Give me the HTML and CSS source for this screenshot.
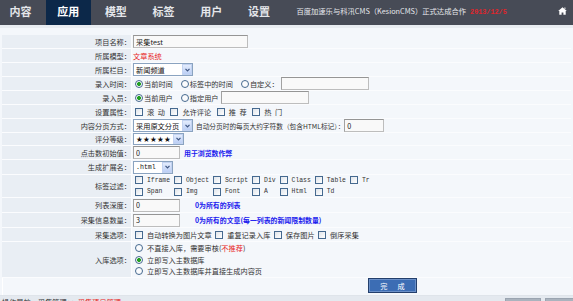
FILE: index.html
```html
<!DOCTYPE html>
<html lang="zh-CN">
<head>
<meta charset="utf-8">
<title>采集项目管理</title>
<link rel="stylesheet" href="styles.css">
</head>
<body>
<div class="topnav">
  <ul class="tabs">
    <li>内容</li>
    <li class="active">应用</li>
    <li>模型</li>
    <li>标签</li>
    <li>用户</li>
    <li>设置</li>
  </ul>
  <div class="notice">百度加速乐与科汛CMS（KesionCMS）正式达成合作<span class="date">2013/12/5</span></div>
  <span class="home"><svg width="9" height="8" viewBox="0 0 9 8"><path d="M4.5 0.2 L8.8 4 L7.7 4 L7.7 7.8 L5.4 7.8 L5.4 5.4 L3.6 5.4 L3.6 7.8 L1.3 7.8 L1.3 4 L0.2 4 Z M6.4 0.6 L7.4 0.6 L7.4 2.2 L6.4 1.4 Z" fill="#fff"/></svg></span>
</div>
<div class="subbar"></div>

<div class="form">
  <div class="row h14">
    <div class="lbl">项目名称：</div>
    <div class="val"><input class="ipt w115" type="text" value="采集test"></div>
  </div>
  <div class="row h14">
    <div class="lbl">所属模型：</div>
    <div class="val"><span class="red">文章系统</span></div>
  </div>
  <div class="row h14">
    <div class="lbl">所属栏目：</div>
    <div class="val"><span class="sel w60"><span class="txt">新闻频道</span><span class="arr"><svg width="5" height="4" viewBox="0 0 5 4"><path d="M0.5 0.8 L2.5 2.8 L4.5 0.8" stroke="#3f5682" stroke-width="1.2" fill="none"/></svg></span></span></div>
  </div>
  <div class="row h14">
    <div class="lbl">录入时间：</div>
    <div class="val">
      <label class="opt tight first"><input class="rd" type="radio" name="t" checked>当前时间</label>
      <label class="opt tight"><input class="rd" type="radio" name="t">标签中的时间</label>
      <label class="opt tight last"><input class="rd" type="radio" name="t">自定义：</label>
      <input class="ipt w88" type="text">
    </div>
  </div>
  <div class="row h14">
    <div class="lbl">录入员：</div>
    <div class="val">
      <label class="opt tight first"><input class="rd" type="radio" name="u" checked>当前用户</label>
      <label class="opt tight last"><input class="rd" type="radio" name="u">指定用户</label>
      <input class="ipt w88" type="text">
    </div>
  </div>
  <div class="row h14">
    <div class="lbl">设置属性：</div>
    <div class="val">
      <label class="opt wide first"><input class="cb" type="checkbox">滚&ensp;动</label>
      <label class="opt wide"><input class="cb" type="checkbox">允许评论</label>
      <label class="opt wide"><input class="cb" type="checkbox">推&ensp;荐</label>
      <label class="opt wide"><input class="cb" type="checkbox">热&ensp;门</label>
    </div>
  </div>
  <div class="row h14">
    <div class="lbl">内容分页方式：</div>
    <div class="val">
      <span class="sel w60"><span class="txt">采用原文分页</span><span class="arr"><svg width="5" height="4" viewBox="0 0 5 4"><path d="M0.5 0.8 L2.5 2.8 L4.5 0.8" stroke="#3f5682" stroke-width="1.2" fill="none"/></svg></span></span>
      <span class="small">自动分页时的每页大约字符数（包含HTML标记）：</span>
      <input class="ipt w40" type="text" value="0">
    </div>
  </div>
  <div class="row h13">
    <div class="lbl">评分等级：</div>
    <div class="val"><span class="sel w51"><span class="txt stars">★★★★★</span><span class="arr"><svg width="5" height="4" viewBox="0 0 5 4"><path d="M0.5 0.8 L2.5 2.8 L4.5 0.8" stroke="#3f5682" stroke-width="1.2" fill="none"/></svg></span></span></div>
  </div>
  <div class="row h14">
    <div class="lbl">点击数初始值：</div>
    <div class="val"><input class="ipt w47" type="text" value="0"><span class="tip">用于浏览数作弊</span></div>
  </div>
  <div class="row h15">
    <div class="lbl">生成扩展名：</div>
    <div class="val"><span class="sel w40"><span class="txt mono">.html</span><span class="arr"><svg width="5" height="4" viewBox="0 0 5 4"><path d="M0.5 0.8 L2.5 2.8 L4.5 0.8" stroke="#3f5682" stroke-width="1.2" fill="none"/></svg></span></span></div>
  </div>
  <div class="row h23">
    <div class="lbl">标签过滤：</div>
    <div class="val">
      <div class="tags">
        <label class="tag"><input class="cb" type="checkbox">Iframe</label>
        <label class="tag"><input class="cb" type="checkbox">Object</label>
        <label class="tag"><input class="cb" type="checkbox">Script</label>
        <label class="tag"><input class="cb" type="checkbox">Div</label>
        <label class="tag"><input class="cb" type="checkbox">Class</label>
        <label class="tag"><input class="cb" type="checkbox">Table</label>
        <label class="tag"><input class="cb" type="checkbox">Tr</label>
        <label class="tag"><input class="cb" type="checkbox">Span</label>
        <label class="tag"><input class="cb" type="checkbox">Img</label>
        <label class="tag"><input class="cb" type="checkbox">Font</label>
        <label class="tag"><input class="cb" type="checkbox">A</label>
        <label class="tag"><input class="cb" type="checkbox">Html</label>
        <label class="tag"><input class="cb" type="checkbox">Td</label>
      </div>
    </div>
  </div>
  <div class="row h15">
    <div class="lbl">列表深度：</div>
    <div class="val"><input class="ipt w47" type="text" value="0"><span class="tip far">0为所有的列表</span></div>
  </div>
  <div class="row h15">
    <div class="lbl">采集信息数量：</div>
    <div class="val"><input class="ipt w47" type="text" value="3"><span class="tip far">0为所有的文章(每一列表的新闻限制数量)</span></div>
  </div>
  <div class="row h14">
    <div class="lbl">采集选项：</div>
    <div class="val">
      <label class="opt first"><input class="cb" type="checkbox">自动转换为图片文章</label>
      <label class="opt"><input class="cb" type="checkbox">重复记录入库</label>
      <label class="opt"><input class="cb" type="checkbox">保存图片</label>
      <label class="opt"><input class="cb" type="checkbox">倒序采集</label>
    </div>
  </div>
  <div class="row h36">
    <div class="lbl">入库选项：</div>
    <div class="val">
      <div class="stack">
        <label class="opt"><input class="rd" type="radio" name="s">不直接入库，需要审核(<span class="red">不推荐</span>)</label>
        <label class="opt"><input class="rd" type="radio" name="s" checked>立即写入主数据库</label>
        <label class="opt"><input class="rd" type="radio" name="s">立即写入主数据库并直接生成内容页</label>
      </div>
    </div>
  </div>
</div>

<div class="actions">
  <button class="btn" type="button"><span>完</span><span>成</span></button>
</div>

<div class="footbar">
  <span class="crumb">操作导航：采集管理 &gt;&gt; <span class="red">采集项目管理</span></span>
  <span class="fbtns"><span class="fbtn">添加项目</span><span class="fbtn">返回列表</span></span>
</div>
</body>
</html>
```

FILE: styles.css
```css
html, body {
  margin: 0;
  padding: 0;
}
body {
  width: 573px;
  height: 301px;
  overflow: hidden;
  background: #f4f7fb;
  font-family: "Noto Sans CJK SC", "DejaVu Sans", sans-serif;
  font-size: 7.2px;
  color: #333;
}

/* top navigation */
.topnav {
  display: flex;
  height: 25px;
  background: #474b56;
}
.tabs {
  display: flex;
  gap: 2.7px;
  margin: 0 0 0 -2px;
  padding: 0;
  list-style: none;
}
.tabs li {
  width: 45px;
  height: 25px;
  box-sizing: border-box;
  padding-bottom: 3px;
  display: flex;
  align-items: center;
  justify-content: center;
  color: #e4e6ea;
  font-size: 11px;
  font-weight: bold;
}
.tabs li.active {
  background: #0c2849;
  color: #fff;
}
.notice {
  align-self: center;
  margin: 0 0 4px 15px;
  color: #e6e8ec;
  font-size: 7.3px;
  white-space: nowrap;
}
.notice .date {
  color: #e0242a;
  font-family: "Liberation Mono", monospace;
  font-weight: bold;
  font-size: 6.8px;
  margin-left: 4px;
}
.home {
  align-self: center;
  margin: 0 6px 4px auto;
  display: flex;
}

.subbar {
  height: 10px;
  box-sizing: border-box;
  border-top: 3px solid #e8ecf1;
}

/* form */
.form {
  margin: 0 2px;
}
.row {
  display: flex;
  box-sizing: border-box;
  border-bottom: 1px solid #fbfcfe;
}
.h13 { height: 13px; }
.h14 { height: 14px; }
.h15 { height: 15px; }
.h23 { height: 23px; }
.h36 { height: 36px; }

.lbl {
  width: 130px;
  flex: none;
  box-sizing: border-box;
  background: #e9eef4;
  border-right: 1px solid #fbfcfe;
  display: flex;
  align-items: center;
  justify-content: flex-end;
  white-space: nowrap;
}
.val {
  flex: 1;
  display: flex;
  align-items: center;
  padding-left: 1px;
  white-space: nowrap;
}

.red { color: #e8231b; }

.ipt {
  box-sizing: border-box;
  height: 13px;
  margin: 0;
  padding: 0 2px;
  border: 1px solid #bdbdbd;
  border-top-color: #959595;
  border-left-color: #a2a2a2;
  background: #f9f9f9;
  font: inherit;
  font-size: 7.2px;
  color: #222;
  outline: none;
}
.w115 { width: 115px; }
.w88 { width: 88px; }
.w47 { width: 47px; }
.w40 { width: 40px; }

.sel {
  display: inline-flex;
  align-items: stretch;
  box-sizing: border-box;
  height: 13px;
  border: 1px solid #8aa3c0;
  background: #fff;
}
.sel.w60 { width: 60px; }
.sel.w51 { width: 51px; height: 12px; }
.sel.w40 { width: 40px; }
.sel .txt {
  flex: 1;
  display: flex;
  align-items: center;
  padding-left: 2px;
  overflow: hidden;
  color: #111;
}
.sel .arr {
  width: 10px;
  flex: none;
  box-sizing: border-box;
  border: 1px solid #c3d3f1;
  background: linear-gradient(#e3ecfd, #bccff5);
  display: flex;
  align-items: center;
  justify-content: center;
}
.stars {
  font-family: "DejaVu Sans", sans-serif;
  font-size: 7.6px;
  letter-spacing: 0.2px;
  color: #000;
}
.mono {
  font-family: "Liberation Mono", monospace;
  font-size: 6.6px;
}

.small {
  font-size: 6.7px;
  margin-left: 3px;
}

.tip {
  margin-left: 4px;
  color: #2020ee;
  font-weight: bold;
  font-size: 6.9px;
}
.tip.far { margin-left: 15px; }

/* checkbox / radio */
.cb, .rd {
  -webkit-appearance: none;
  appearance: none;
  box-sizing: border-box;
  width: 8px;
  height: 8px;
  margin: 0 4px 0 0;
  flex: none;
  border: 1px solid #45698f;
  background: linear-gradient(135deg, #dfe4ea, #ffffff);
}
.rd {
  border-radius: 50%;
  background: #fafbfd;
}
.rd:checked {
  background: radial-gradient(circle, #23a023 0 1.6px, #fafbfd 2.3px);
}

.opt {
  display: inline-flex;
  align-items: center;
  margin-right: 3.5px;
}
.opt.first { margin-left: 2px; }
.opt.tight { margin-right: 8px; }
.opt.tight .rd { margin-right: 1px; }
.opt.tight.last { margin-right: 2px; }
.opt.wide { margin-right: 5.5px; }

.tags {
  margin-left: 2px;
  display: grid;
  grid-template-columns: repeat(7, max-content);
  grid-auto-rows: 11.5px;
}
.tag {
  display: inline-flex;
  align-items: center;
  padding-right: 4px;
  font-family: "Liberation Mono", monospace;
  font-size: 6.4px;
}

.stack {
  display: flex;
  flex-direction: column;
}
.stack .opt {
  height: 11.5px;
  margin-left: 2px;
}

/* actions */
.actions {
  height: 17px;
  box-sizing: border-box;
  margin: 0 2px;
  border-left: 1px solid #ffffff;
  padding-left: 365px;
}
.btn {
  width: 49px;
  height: 15px;
  margin: 0;
  padding: 0;
  box-sizing: border-box;
  display: flex;
  align-items: center;
  justify-content: center;
  gap: 10px;
  background: #3c6db4;
  border: 1px solid #233f6c;
  box-shadow: inset 0 0 0 1px #6b90c8;
  color: #fff;
  font-family: inherit;
  font-size: 7.2px;
}

/* footer */
.footbar {
  height: 20px;
  box-sizing: border-box;
  border-top: 1px solid #dfe4ea;
  background: #e4e9ef;
  display: flex;
  align-items: flex-start;
  padding: 1px 0 0 2px;
}
.crumb {
  color: #333;
  white-space: nowrap;
}
.fbtns {
  margin-left: auto;
  margin-right: -8px;
  display: flex;
  gap: 4px;
  padding-top: 1px;
}
.fbtn {
  width: 36px;
  height: 14px;
  box-sizing: border-box;
  background: #aab3be;
  border: 1px solid #9aa4b0;
  color: #eef1f5;
  display: flex;
  align-items: center;
  justify-content: center;
}
```
